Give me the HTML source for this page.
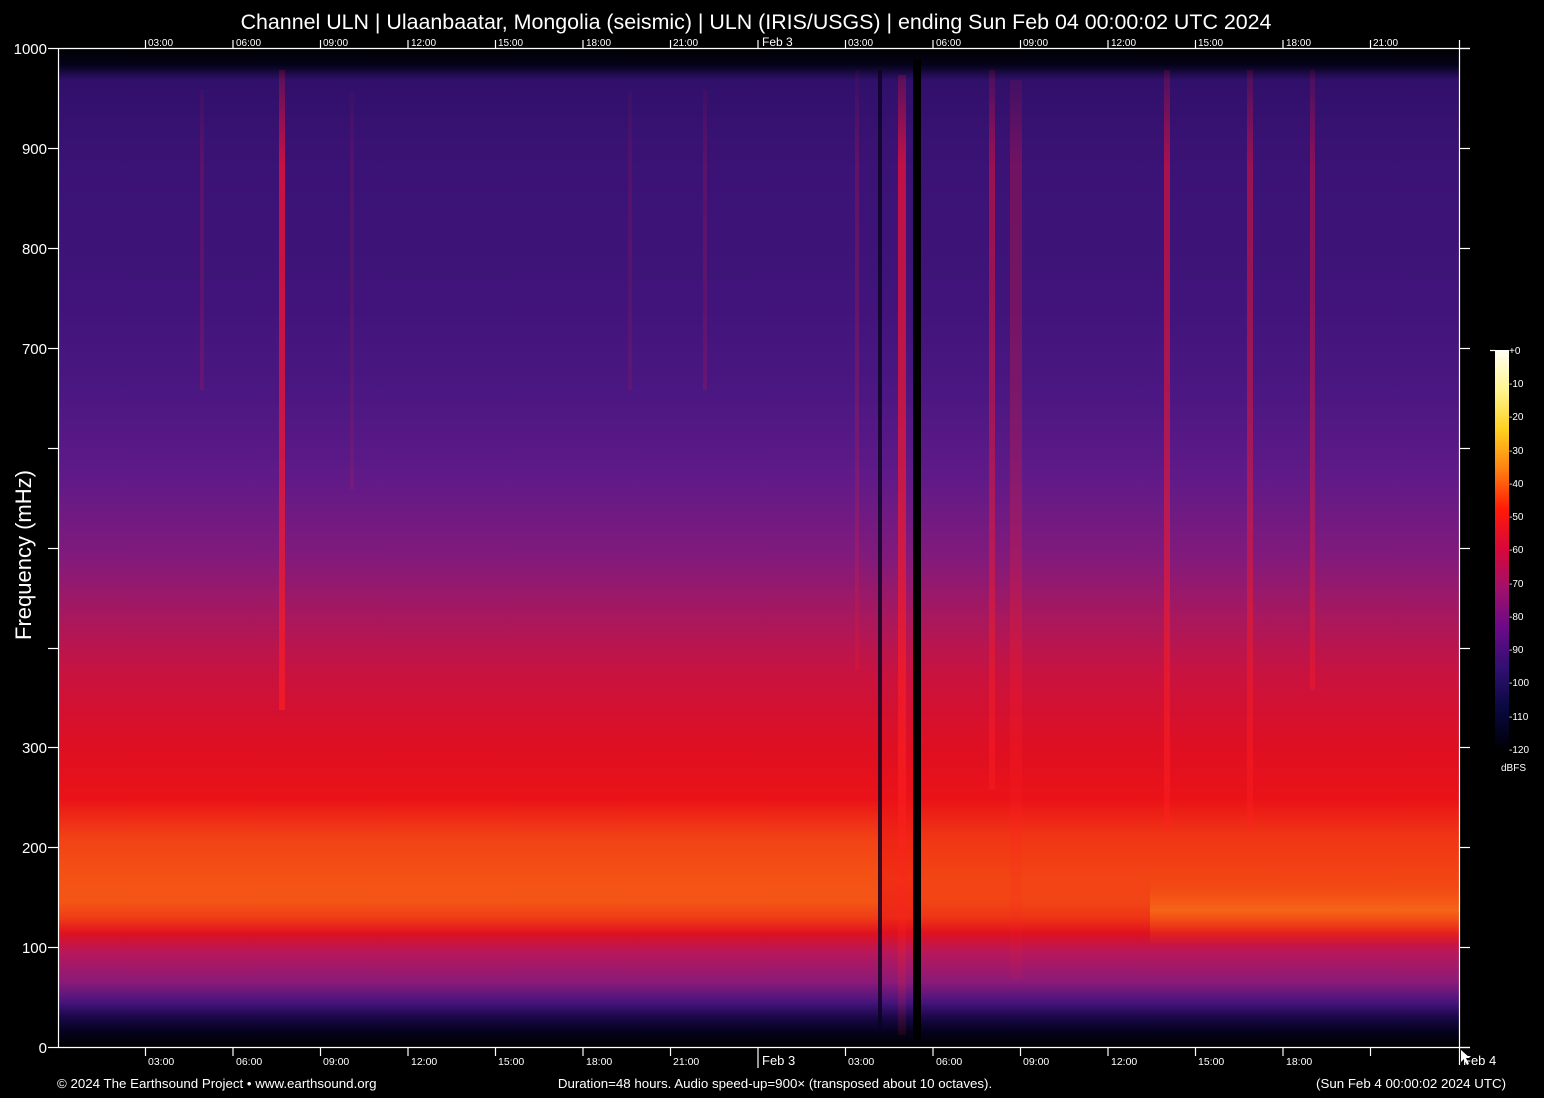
<!DOCTYPE html>
<html><head><meta charset="utf-8"><style>
html,body{margin:0;padding:0;background:#000;width:1544px;height:1098px;overflow:hidden}
svg{display:block}
text{font-family:"Liberation Sans",Arial,sans-serif;fill:#fff}
</style></head><body>
<svg width="1544" height="1098" viewBox="0 0 1544 1098" xmlns="http://www.w3.org/2000/svg">
<defs>
<linearGradient id="bg" x1="0" y1="48" x2="0" y2="1047" gradientUnits="userSpaceOnUse">
<stop offset="0" stop-color="#000"/>
<stop offset="0.017" stop-color="#05031a"/>
<stop offset="0.032" stop-color="#30106a"/>
<stop offset="0.1" stop-color="#3a1274"/>
<stop offset="0.25" stop-color="#40147a"/>
<stop offset="0.35" stop-color="#4c1782"/>
<stop offset="0.43" stop-color="#601a88"/>
<stop offset="0.51" stop-color="#821a7c"/>
<stop offset="0.57" stop-color="#a8185e"/>
<stop offset="0.63" stop-color="#ca123e"/>
<stop offset="0.70" stop-color="#de0f22"/>
<stop offset="0.75" stop-color="#ea1218"/>
<stop offset="0.79" stop-color="#ee2414"/>
<stop offset="0.83" stop-color="#f03012"/>
<stop offset="0.87" stop-color="#ec2816"/>
<stop offset="0.885" stop-color="#e0101e"/>
<stop offset="0.905" stop-color="#b8185a"/>
<stop offset="0.935" stop-color="#8a1a78"/>
<stop offset="0.955" stop-color="#48147e"/>
<stop offset="0.97" stop-color="#1a0848"/>
<stop offset="0.985" stop-color="#05021c"/>
<stop offset="1" stop-color="#000"/>
</linearGradient>
<linearGradient id="bandL" x1="0" y1="800" x2="0" y2="935" gradientUnits="userSpaceOnUse">
<stop offset="0" stop-color="#f87018" stop-opacity="0"/>
<stop offset="0.3" stop-color="#f87018" stop-opacity="0.4"/>
<stop offset="0.75" stop-color="#fa8018" stop-opacity="0.5"/>
<stop offset="1" stop-color="#f87018" stop-opacity="0"/>
</linearGradient>
<linearGradient id="band" x1="0" y1="875" x2="0" y2="945" gradientUnits="userSpaceOnUse">
<stop offset="0" stop-color="#f44a10" stop-opacity="0"/>
<stop offset="0.5" stop-color="#f87a18" stop-opacity="0.65"/>
<stop offset="1" stop-color="#f44a10" stop-opacity="0"/>
</linearGradient>
<linearGradient id="cb" x1="0" y1="350" x2="0" y2="748" gradientUnits="userSpaceOnUse">
<stop offset="0" stop-color="#fffff4"/>
<stop offset="0.1" stop-color="#fff590"/>
<stop offset="0.2" stop-color="#ffd020"/>
<stop offset="0.3" stop-color="#ff8010"/>
<stop offset="0.4" stop-color="#ff1a08"/>
<stop offset="0.5" stop-color="#d8083a"/>
<stop offset="0.6" stop-color="#a0106a"/>
<stop offset="0.7" stop-color="#6a0a88"/>
<stop offset="0.8" stop-color="#301070"/>
<stop offset="0.9" stop-color="#0a0840"/>
<stop offset="1" stop-color="#000008"/>
</linearGradient>
<linearGradient id="streak" x1="0" y1="70" x2="0" y2="1040" gradientUnits="userSpaceOnUse">
<stop offset="0" stop-color="#ff1030" stop-opacity="0.2"/>
<stop offset="0.1" stop-color="#ff1030" stop-opacity="0.8"/>
<stop offset="0.7" stop-color="#ff2020" stop-opacity="0.7"/>
<stop offset="1" stop-color="#ff2020" stop-opacity="0.1"/>
</linearGradient>
</defs>

<rect x="58" y="48" width="1401" height="999" fill="url(#bg)"/>
<rect x="58" y="800" width="820" height="135" fill="url(#bandL)"/>
<rect x="920" y="800" width="539" height="135" fill="url(#bandL)" opacity="0.6"/>
<rect x="1150" y="875" width="309" height="70" fill="url(#band)"/>
<rect x="279" y="70" width="6" height="640" fill="url(#streak)" opacity="0.9"/>
<rect x="898" y="75" width="8" height="960" fill="url(#streak)" opacity="0.85"/>
<rect x="878" y="70" width="4" height="960" fill="#0a0420" opacity="0.8"/>
<rect x="913" y="60" width="8" height="980" fill="#000"/>
<rect x="989" y="70" width="6" height="720" fill="url(#streak)" opacity="0.6"/>
<rect x="1010" y="80" width="12" height="900" fill="url(#streak)" opacity="0.35"/>
<rect x="1164" y="70" width="6" height="760" fill="url(#streak)" opacity="0.7"/>
<rect x="1247" y="70" width="6" height="760" fill="url(#streak)" opacity="0.6"/>
<rect x="1310" y="70" width="5" height="620" fill="url(#streak)" opacity="0.5"/>
<rect x="200" y="90" width="4" height="300" fill="url(#streak)" opacity="0.2"/>
<rect x="703" y="90" width="4" height="300" fill="url(#streak)" opacity="0.2"/>
<rect x="350" y="90" width="4" height="400" fill="url(#streak)" opacity="0.15"/>
<rect x="628" y="90" width="4" height="300" fill="url(#streak)" opacity="0.15"/>
<rect x="855" y="70" width="4" height="600" fill="url(#streak)" opacity="0.25"/>

<g stroke="#fff" stroke-width="1.2" fill="none">
<line x1="58" y1="48.5" x2="1470" y2="48.5"/>
<line x1="58" y1="1047.5" x2="1470" y2="1047.5"/>
<line x1="58.5" y1="48" x2="58.5" y2="1048"/>
<line x1="1459.5" y1="40" x2="1459.5" y2="1065"/>
<g id="lt">
<line x1="48" y1="48.5" x2="58" y2="48.5"/><line x1="48" y1="148.5" x2="58" y2="148.5"/>
<line x1="48" y1="248.5" x2="58" y2="248.5"/><line x1="48" y1="348.5" x2="58" y2="348.5"/>
<line x1="48" y1="448.5" x2="58" y2="448.5"/><line x1="48" y1="548.5" x2="58" y2="548.5"/>
<line x1="48" y1="648.5" x2="58" y2="648.5"/><line x1="48" y1="747.5" x2="58" y2="747.5"/>
<line x1="48" y1="847.5" x2="58" y2="847.5"/><line x1="48" y1="947.5" x2="58" y2="947.5"/>
<line x1="48" y1="1047.5" x2="58" y2="1047.5"/>
</g>
<use href="#lt" x="1412"/>
<g>
<line x1="145.5" y1="40" x2="145.5" y2="48"/><line x1="233" y1="40" x2="233" y2="48"/>
<line x1="320.5" y1="40" x2="320.5" y2="48"/><line x1="408" y1="40" x2="408" y2="48"/>
<line x1="495.5" y1="40" x2="495.5" y2="48"/><line x1="583" y1="40" x2="583" y2="48"/>
<line x1="670.5" y1="40" x2="670.5" y2="48"/><line x1="758" y1="40" x2="758" y2="48"/>
<line x1="845.5" y1="40" x2="845.5" y2="48"/><line x1="933" y1="40" x2="933" y2="48"/>
<line x1="1020.5" y1="40" x2="1020.5" y2="48"/><line x1="1108" y1="40" x2="1108" y2="48"/>
<line x1="1195.5" y1="40" x2="1195.5" y2="48"/><line x1="1283" y1="40" x2="1283" y2="48"/>
<line x1="1370.5" y1="40" x2="1370.5" y2="48"/>
</g>
<g transform="translate(0,1008)">
<line x1="145.5" y1="40" x2="145.5" y2="48"/><line x1="233" y1="40" x2="233" y2="48"/>
<line x1="320.5" y1="40" x2="320.5" y2="48"/><line x1="408" y1="40" x2="408" y2="48"/>
<line x1="495.5" y1="40" x2="495.5" y2="48"/><line x1="583" y1="40" x2="583" y2="48"/>
<line x1="670.5" y1="40" x2="670.5" y2="48"/><line x1="758" y1="40" x2="758" y2="60"/>
<line x1="845.5" y1="40" x2="845.5" y2="48"/><line x1="933" y1="40" x2="933" y2="48"/>
<line x1="1020.5" y1="40" x2="1020.5" y2="48"/><line x1="1108" y1="40" x2="1108" y2="48"/>
<line x1="1195.5" y1="40" x2="1195.5" y2="48"/><line x1="1283" y1="40" x2="1283" y2="48"/>
<line x1="1370.5" y1="40" x2="1370.5" y2="48"/>
</g>
<line x1="1490" y1="350.5" x2="1495" y2="350.5"/>
</g>

<text x="756" y="29" font-size="21.4" text-anchor="middle">Channel ULN | Ulaanbaatar, Mongolia (seismic) | ULN (IRIS/USGS) | ending Sun Feb 04 00:00:02 UTC 2024</text>

<g font-size="15" text-anchor="end">
<text x="47" y="54">1000</text><text x="47" y="154">900</text><text x="47" y="254">800</text>
<text x="47" y="354">700</text><text x="47" y="753">300</text><text x="47" y="853">200</text>
<text x="47" y="953">100</text><text x="47" y="1053">0</text>
</g>
<text transform="translate(31,555) rotate(-90)" font-size="22" text-anchor="middle">Frequency (mHz)</text>

<g font-size="10">
<text x="148" y="46">03:00</text><text x="236" y="46">06:00</text><text x="323" y="46">09:00</text>
<text x="411" y="46">12:00</text><text x="498" y="46">15:00</text><text x="586" y="46">18:00</text>
<text x="673" y="46">21:00</text><text x="762" y="46" font-size="12">Feb  3</text><text x="848" y="46">03:00</text>
<text x="936" y="46">06:00</text><text x="1023" y="46">09:00</text><text x="1111" y="46">12:00</text>
<text x="1198" y="46">15:00</text><text x="1286" y="46">18:00</text><text x="1373" y="46">21:00</text>
</g>
<g font-size="10.5">
<text x="148" y="1065">03:00</text><text x="236" y="1065">06:00</text><text x="323" y="1065">09:00</text>
<text x="411" y="1065">12:00</text><text x="498" y="1065">15:00</text><text x="586" y="1065">18:00</text>
<text x="673" y="1065">21:00</text><text x="762" y="1065" font-size="13">Feb  3</text><text x="848" y="1065">03:00</text>
<text x="936" y="1065">06:00</text><text x="1023" y="1065">09:00</text><text x="1111" y="1065">12:00</text>
<text x="1198" y="1065">15:00</text><text x="1286" y="1065">18:00</text>
<text x="1463" y="1065" font-size="13">Feb  4</text>
</g>

<rect x="1495" y="350" width="14" height="398" fill="url(#cb)"/>
<g font-size="10" fill="#ddd">
<text x="1509" y="354">+0</text><text x="1509" y="387">-10</text><text x="1509" y="420">-20</text>
<text x="1509" y="454">-30</text><text x="1509" y="487">-40</text><text x="1509" y="520">-50</text>
<text x="1509" y="553">-60</text><text x="1509" y="587">-70</text><text x="1509" y="620">-80</text>
<text x="1509" y="653">-90</text><text x="1509" y="686">-100</text><text x="1509" y="720">-110</text>
<text x="1509" y="753">-120</text><text x="1501" y="771">dBFS</text>
</g>

<g font-size="13.3" fill="#ddd">
<text x="57" y="1088">© 2024 The Earthsound Project • www.earthsound.org</text>
<text x="775" y="1088" text-anchor="middle">Duration=48 hours. Audio speed-up=900× (transposed about 10 octaves).</text>
<text x="1506" y="1088" text-anchor="end">(Sun Feb  4 00:00:02 2024 UTC)</text>
</g>
<path d="M1461 1050 L1461 1062 L1464 1059 L1467 1065 L1469 1064 L1466 1058 L1470 1058 Z" fill="#fff"/>
</svg>
</body></html>
